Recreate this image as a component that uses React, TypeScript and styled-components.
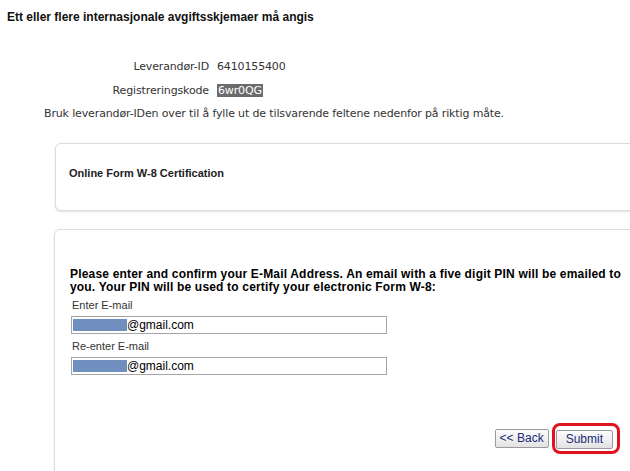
import React from 'react';
import styled, {createGlobalStyle} from "styled-components";

const GlobalStyle = createGlobalStyle`
  html, body {
    margin: 0;
    background: #fff;
    overflow: hidden;
  }
`

export default function App() {
    return (
        <PageStyled>
            <GlobalStyle/>
            <TitleStyled>Ett eller flere internasjonale avgiftsskjemaer må angis</TitleStyled>

            <InfoGridStyled>
                <InfoLabelStyled>Leverandør-ID</InfoLabelStyled>
                <span>6410155400</span>
                <InfoLabelStyled>Registreringskode</InfoLabelStyled>
                <span><MarkedStyled>6wr0QG</MarkedStyled></span>
            </InfoGridStyled>

            <NoteStyled>Bruk leverandør-IDen over til å fylle ut de tilsvarende feltene nedenfor på riktig måte.</NoteStyled>

            <CardStyled $top={21} $left={55} $height={68}>
                <CardTitleStyled>Online Form W-8 Certification</CardTitleStyled>
            </CardStyled>

            <CardStyled $top={18} $left={54} $height={260}>
                <FormBodyStyled>
                    <LeadStyled>
                        Please enter and confirm your E-Mail Address. An email with a five digit PIN will be emailed to
                        you. Your PIN will be used to certify your electronic Form W-8:
                    </LeadStyled>

                    <FieldLabelStyled htmlFor="email">Enter E-mail</FieldLabelStyled>
                    <EmailBoxStyled id="email">
                        <MaskStyled/>@gmail.com
                    </EmailBoxStyled>

                    <FieldLabelStyled htmlFor="email2">Re-enter E-mail</FieldLabelStyled>
                    <EmailBoxStyled id="email2">
                        <MaskStyled/>@gmail.com
                    </EmailBoxStyled>

                    <ButtonRowStyled>
                        <ButtonStyled type="button" $pad={4}>&lt;&lt; Back</ButtonStyled>
                        <HighlightStyled>
                            <ButtonStyled type="button" $pad={9}>Submit</ButtonStyled>
                        </HighlightStyled>
                    </ButtonRowStyled>
                </FormBodyStyled>
            </CardStyled>
        </PageStyled>
    );
}

const PageStyled = styled.div`
  width: 630px;
  height: 471px;
  overflow: hidden;
  color: #333;
`

const TitleStyled = styled.div`
  padding: 9px 0 0 7px;
  font: bold 12px/16px "Liberation Sans", Arial, sans-serif;
  color: #111;
`

const InfoGridStyled = styled.div`
  display: grid;
  grid-template-columns: 209px auto;
  column-gap: 8px;
  grid-auto-rows: 24px;
  margin-top: 30px;
  font: 11px/16px "DejaVu Sans", Verdana, sans-serif;
  letter-spacing: -0.14px;
  align-items: center;
`

const InfoLabelStyled = styled.span`
  text-align: right;
`

const MarkedStyled = styled.span`
  background: #6b6b6b;
  color: #fff;
  padding: 0 1px;
`

const NoteStyled = styled.div`
  margin: 3px 0 0 44px;
  font: 11px/16px "DejaVu Sans", Verdana, sans-serif;
  letter-spacing: -0.14px;
`

const CardStyled = styled.div<{ $top: number, $left: number, $height: number }>`
  margin: ${p => p.$top}px 0 0 ${p => p.$left}px;
  width: 620px;
  height: ${p => p.$height}px;
  box-sizing: border-box;
  border: 1px solid #dcdcdc;
  border-radius: 6px;
  box-shadow: 0 1px 2px rgba(0, 0, 0, 0.12);
  background: #fff;
`

const CardTitleStyled = styled.div`
  padding: 22px 0 0 13px;
  font: bold 11px/14px "Liberation Sans", Arial, sans-serif;
  color: #222;
`

const FormBodyStyled = styled.div`
  padding: 38px 0 0 15px;
  width: 562px;
`

const LeadStyled = styled.div`
  font: bold 12px/13px "Liberation Sans", Arial, sans-serif;
  letter-spacing: 0.18px;
  color: #000;
  margin-bottom: 3px;
`

const FieldLabelStyled = styled.label`
  display: block;
  margin-left: 2px;
  font: 11px/16px "Liberation Sans", Arial, sans-serif;
  color: #333;
`

const EmailBoxStyled = styled.div`
  display: flex;
  align-items: center;
  box-sizing: border-box;
  width: 316px;
  height: 18px;
  margin: 3px 0 4px 1px;
  border: 1px solid #a5a5a5;
  padding-left: 1px;
  font: 12px "Liberation Sans", Arial, sans-serif;
  color: #000;
`

const MaskStyled = styled.span`
  display: inline-block;
  width: 54px;
  height: 12px;
  background: #6f8fbf;
`

const ButtonRowStyled = styled.div`
  display: flex;
  justify-content: flex-end;
  align-items: center;
  gap: 3px;
  margin-top: 48px;
  padding-right: 12px;
`

const ButtonStyled = styled.button<{ $pad: number }>`
  height: 19px;
  padding: 0 ${p => p.$pad}px;
  border: 1px solid #9a9a9a;
  border-radius: 2px;
  background: linear-gradient(#fdfdfd, #e2e2e2);
  font: 12px "Liberation Sans", Arial, sans-serif;
  color: #1c2a78;
`

const HighlightStyled = styled.div`
  padding: 3px 4px 2px 1px;
  border: 3px solid #e0141e;
  border-radius: 8px;
`
